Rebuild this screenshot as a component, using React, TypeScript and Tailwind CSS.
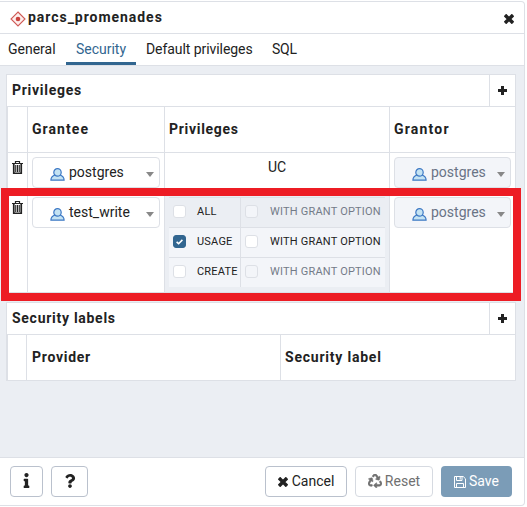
import React from "react";
import { FaInfo, FaQuestion, FaRecycle } from "react-icons/fa";

function CloseIcon({ className = "" }: { className?: string }) {
  return (
    <svg width="10" height="10" viewBox="0 0 10 10" className={className}>
      <path d="M2.2 2.2 L7.8 7.8 M7.8 2.2 L2.2 7.8" stroke="currentColor" strokeWidth="3.5" strokeLinecap="square" />
    </svg>
  );
}

function PlusIcon() {
  return (
    <svg width="9" height="9" viewBox="0 0 9 9" shapeRendering="crispEdges">
      <path d="M3 0h3v3h3v3h-3v3h-3v-3h-3v-3h3z" fill="#222222" />
    </svg>
  );
}

function TrashIcon() {
  return (
    <svg width="11" height="13" viewBox="0 0 11 13" fill="none" stroke="#222222">
      <path d="M0 2.5h11M3.5 2V.5h4V2" strokeWidth="1.2" />
      <path d="M1.75 3v9.25h7.5V3" strokeWidth="1.7" />
      <path d="M3.75 4v7M5.5 4v7M7.25 4v7" strokeWidth="1.1" />
    </svg>
  );
}

function SaveIcon() {
  return (
    <svg width="12" height="12" viewBox="0 0 12 12" fill="none" stroke="currentColor">
      <path d="M.5.5h8.7l2.3 2.3v8.7H.5z" />
      <path d="M2.5 11.5v-4h7v4M2.5.5v4h5.5v-4" />
      <path d="M6.2 1v2.6" />
    </svg>
  );
}

function UserIcon() {
  return (
    <svg width="15" height="13" viewBox="0 0 15 13" fill="#c4e3f3" stroke="#3c78c4" strokeWidth="1.2">
      <path d="M.9 12.2C.9 9.4 2.8 7.6 5.3 7h4.4c2.5.6 4.4 2.4 4.4 5.2z" />
      <circle cx="7.5" cy="4.4" r="3.7" />
    </svg>
  );
}

function SchemaIcon() {
  return (
    <svg width="16" height="16" viewBox="0 0 16 16">
      <path d="M8 1 15 8 8 15 1 8z" fill="#fdeeed" stroke="#cf5a56" strokeWidth="1.1" />
      <circle cx="8" cy="8" r="2.3" fill="#c9413d" />
    </svg>
  );
}

function Select({ label, disabled = false }: { label: string; disabled?: boolean }) {
  return (
    <div
      className={
        "flex h-[31px] items-center rounded-[4px] border border-[#dde0e6] pl-[17px] pr-[5px] " +
        (disabled ? "bg-[#f3f5f9] text-[#697386]" : "bg-white text-[#222222]")
      }
    >
      <span className="pt-[3px]">
        <UserIcon />
      </span>
      <span className="ml-[4px] flex-1 pb-[2px] text-[14px] leading-[20px]">{label}</span>
      <svg width="8" height="5" viewBox="0 0 8 5" className="mt-[3px]">
        <path d="M0 0h8L4 5z" fill="#888888" />
      </svg>
    </div>
  );
}

function Checkbox({ checked = false, disabled = false }: { checked?: boolean; disabled?: boolean }) {
  return (
    <span
      className={
        "flex h-[13px] w-[13px] shrink-0 items-center justify-center rounded-[3px] border " +
        (checked
          ? "border-[#326690] bg-[#326690]"
          : disabled
            ? "border-[#dde0e6] bg-[#f3f5f9]"
            : "border-[#dde0e6] bg-white")
      }
    >
      {checked && (
        <svg width="7" height="6" viewBox="0 0 7 6" fill="none">
          <path d="M.6 2.9 2.6 4.7 6.4.9" stroke="#ffffff" strokeWidth="1.6" />
        </svg>
      )}
    </span>
  );
}

function PrivilegeRow({
  name,
  checked = false,
  grantable = false,
  shaded = false,
}: {
  name: string;
  checked?: boolean;
  grantable?: boolean;
  shaded?: boolean;
}) {
  return (
    <div
      className={
        "flex h-[30px] border-t border-[#dde0e6] pb-[2px] text-[11px] leading-[14px] tracking-[0.2px] " +
        (shaded ? "bg-[#ebeef3]" : "bg-[#f3f5f9]")
      }
    >
      <div className="-mb-[2px] flex w-[72px] items-center border-r border-[#dde0e6] pb-[2px] pl-[4px]">
        <Checkbox checked={checked} />
        <span className="ml-[11px] pt-[1px] text-[#222222]">{name}</span>
      </div>
      <div className="flex flex-1 items-center pl-[4px]">
        <Checkbox disabled={!grantable} />
        <span
          className={
            "ml-[12px] whitespace-nowrap pt-[1px] tracking-[0.2px] " + (grantable ? "text-[#222222]" : "text-[#737b88]")
          }
        >
          WITH GRANT OPTION
        </span>
      </div>
    </div>
  );
}

function PanelTitle({ title }: { title: string }) {
  return (
    <div className="flex h-[32px] border-b border-[#dde0e6]">
      <div className="flex-1 pl-[5px] text-[14px] font-bold leading-[31px] tracking-[0.72px]">{title}</div>
      <div className="flex w-[26px] items-center justify-center border-l border-[#dde0e6]">
        <PlusIcon />
      </div>
    </div>
  );
}

const privilegeColumns = "grid grid-cols-[21px_137px_225px_125px]";
const headerCell = "border-r border-[#dde0e6] pl-[4px] text-[14px] font-bold leading-[44px]";

export default function App() {
  return (
    <div className="h-[507px] w-[527px] bg-white pt-px font-['Roboto',sans-serif] text-[#222222]">
      <div className="relative flex h-[505px] w-[525px] flex-col rounded-r-[4px] border-y border-r border-[#dde0e6] bg-white">
        <header className="flex h-[32px] shrink-0 items-center border-b border-[#dde0e6] pl-[10px] pr-[10px]">
          <span className="pt-[3px]">
            <SchemaIcon />
          </span>
          <h1 className="ml-[2px] flex-1 pb-[2px] text-[14px] font-bold leading-[20px] tracking-[0.96px]">
            parcs_promenades
          </h1>
          <CloseIcon className="mt-[2px]" />
        </header>

        <nav className="flex h-[32px] shrink-0 border-b border-[#dde0e6] text-[14px] leading-[30px]">
          <span className="w-[66px] pl-[8px]">General</span>
          <span className="h-[31px] w-[70px] border-b-[3px] border-[#326690] text-center text-[#326690]">Security</span>
          <span className="w-[136px] whitespace-nowrap pl-[10px] tracking-[-0.07px]">Default privileges</span>
          <span className="tracking-[-0.2px]">SQL</span>
        </nav>

        <main className="flex-1 bg-[#ebeef3] pl-[6px] pr-[8px] pt-[8px]">
          <section className="h-[219px] border border-[#dde0e6] bg-white">
            <PanelTitle title="Privileges" />
            <div className={privilegeColumns + " h-[46px] border-b border-[#dde0e6]"}>
              <div className="border-x border-[#dde0e6]" />
              <div className={headerCell + " tracking-[1.05px]"}>Grantee</div>
              <div className={headerCell + " tracking-[0.7px]"}>Privileges</div>
              <div className="pl-[4px] text-[14px] font-bold leading-[44px] tracking-[1.2px]">Grantor</div>
            </div>
            <div className={privilegeColumns + " h-[40px] border-b border-[#dde0e6]"}>
              <div className="flex justify-center border-x border-[#dde0e6] pt-[8px]">
                <TrashIcon />
              </div>
              <div className="border-r border-[#dde0e6] px-[4px] pt-[4px]">
                <Select label="postgres" />
              </div>
              <div className="border-r border-[#dde0e6] pt-[4px] text-center text-[14px] leading-[20px]">UC</div>
              <div className="pl-[4px] pr-[4px] pt-[4px]">
                <Select label="postgres" disabled />
              </div>
            </div>
            <div className={privilegeColumns + " h-[99px]"}>
              <div className="flex justify-center border-x border-[#dde0e6] pt-[8px]">
                <TrashIcon />
              </div>
              <div className="border-r border-[#dde0e6] px-[4px] pt-[4px]">
                <Select label="test_write" />
              </div>
              <div className="border-r border-[#dde0e6] bg-[#ebeef3] px-[4px] pt-[4px]">
                <PrivilegeRow name="ALL" shaded />
                <PrivilegeRow name="USAGE" checked grantable />
                <PrivilegeRow name="CREATE" />
              </div>
              <div className="pl-[4px] pr-[4px] pt-[4px]">
                <Select label="postgres" disabled />
              </div>
            </div>
          </section>

          <section className="mt-[9px] h-[79px] border border-[#dde0e6] bg-white">
            <PanelTitle title="Security labels" />
            <div className="grid h-[45px] grid-cols-[20px_254px_234px]">
              <div className="border-x border-[#dde0e6]" />
              <div className={headerCell + " pl-[5px] tracking-[0.72px]"}>Provider</div>
              <div className="pl-[4px] text-[14px] font-bold leading-[44px] tracking-[0.78px]">Security label</div>
            </div>
          </section>
        </main>

        <footer className="flex h-[48px] shrink-0 items-start border-t border-[#dde0e6] pl-[10px] pr-[12px] pt-[8px] text-[14px]">
          <button className="flex h-[31px] w-[33px] items-center justify-center rounded-[4px] border border-[#bac1cd] pb-[2px]">
            <FaInfo size={15} />
          </button>
          <button className="ml-[8px] flex h-[31px] w-[37px] items-center justify-center rounded-[4px] border border-[#bac1cd] pb-[2px]">
            <FaQuestion size={14} />
          </button>
          <div className="flex-1" />
          <button className="flex h-[31px] w-[82px] items-center justify-center gap-[4px] rounded-[4px] border border-[#bac1cd]">
            <CloseIcon className="mt-px" />
            Cancel
          </button>
          <button className="ml-[8px] flex h-[31px] w-[78px] items-center justify-center gap-[3px] rounded-[4px] border border-[#d6dae1] text-[#707070]">
            <FaRecycle size={14} stroke="currentColor" strokeWidth={18} className="-mt-[2px]" />
            Reset
          </button>
          <button className="ml-[8px] flex h-[31px] w-[71px] items-center justify-center gap-[3px] rounded-[4px] bg-[#7b9cb7] text-white">
            <SaveIcon />
            Save
          </button>
        </footer>

        <div className="pointer-events-none absolute left-[1px] top-[186px] h-[113px] w-[520px] border-8 border-[#ed1c24]" />
      </div>
    </div>
  );
}
